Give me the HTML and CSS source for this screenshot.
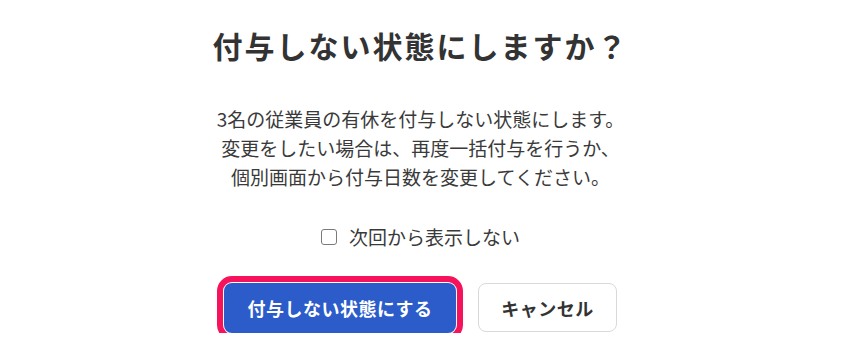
FILE: index.html
```html
<!DOCTYPE html>
<html lang="ja">
<head>
<meta charset="utf-8">
<link rel="stylesheet" href="styles.css">
</head>
<body>
<div class="dialog">
  <h1 class="title">付与しない状態にしますか？</h1>
  <p class="message">3名の従業員の有休を付与しない状態にします。<br>変更をしたい場合は、再度一括付与を行うか、<br>個別画面から付与日数を変更してください。</p>
  <label class="check-row"><input type="checkbox" class="check"><span>次回から表示しない</span></label>
  <div class="actions">
    <button class="btn btn-primary">付与しない状態にする</button>
    <button class="btn btn-secondary">キャンセル</button>
  </div>
</div>
</body>
</html>
```
FILE: styles.css
```css
html, body {
  margin: 0;
  padding: 0;
  background: #ffffff;
}
body {
  font-family: "Noto Sans CJK JP", "Noto Sans", sans-serif;
  color: #333333;
}
.dialog {
  display: flex;
  flex-direction: column;
  align-items: center;
  padding-top: 25px;
}
.title {
  margin: 0;
  font-size: 30px;
  line-height: 40px;
  font-weight: 700;
  letter-spacing: 2px;
  color: #333333;
}
.message {
  margin: 39px 0 0;
  font-size: 19px;
  line-height: 29px;
  text-align: center;
  color: #3a3a3a;
}
.check-row {
  margin-top: 34px;
  display: flex;
  align-items: center;
  gap: 12px;
  font-size: 19px;
  line-height: 24px;
  color: #3a3a3a;
}
.check {
  -webkit-appearance: none;
  appearance: none;
  margin: 0;
  width: 16px;
  height: 16px;
  box-sizing: border-box;
  border: 1.5px solid #7a7a7a;
  border-radius: 3px;
  background: #ffffff;
}
.actions {
  margin-top: 34px;
  display: flex;
  gap: 22px;
}
.btn {
  font-family: inherit;
  font-size: 18px;
  font-weight: 700;
  letter-spacing: 0.5px;
  border-radius: 8px;
  height: 50px;
  padding: 0;
}
.btn-primary {
  width: 232px;
  background: #2b5cc9;
  color: #ffffff;
  border: none;
  outline: 6px solid #f7125c;
  outline-offset: 1px;
}
.btn-secondary {
  width: 139px;
  height: 49px;
  background: #ffffff;
  color: #333333;
  border: 1px solid #d9d9d9;
}
```
